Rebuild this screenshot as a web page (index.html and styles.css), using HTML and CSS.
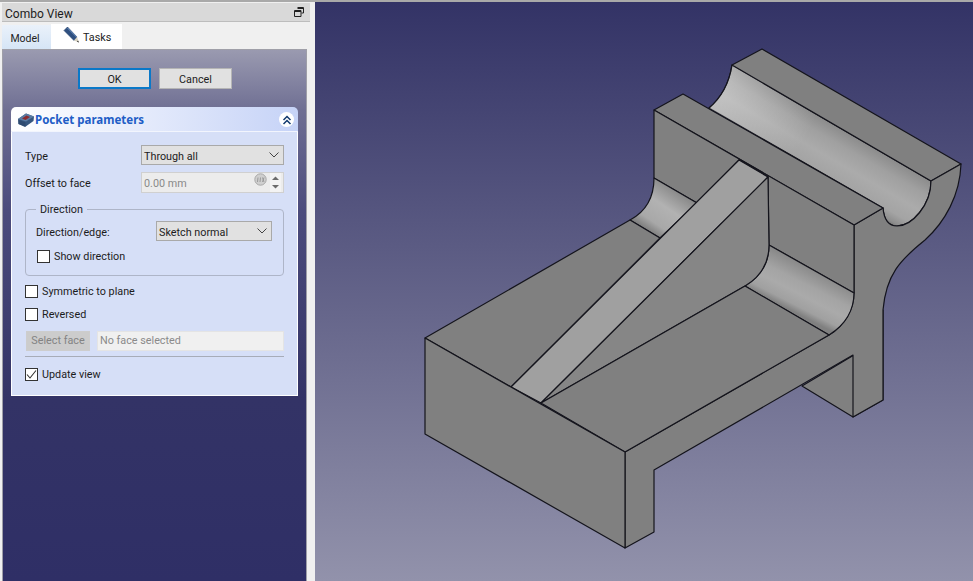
FILE: index.html
```html
<!DOCTYPE html>
<html lang="en">
<head>
<meta charset="utf-8">
<title>Combo View</title>
<link rel="stylesheet" href="styles.css">
</head>
<body>
<div class="app">
  <aside class="dock">
    <header class="dock-title">
      <span class="dock-name">Combo View</span>
      <svg class="float-icon" width="10" height="10" viewBox="0 0 10 10"><path d="M3.500 .5h6v5.500h-2M.5 3.500h6.500v6h-6.500zM.5 4.500h6.500M3.500 1.500h6" fill="none" stroke="#222"/></svg>
    </header>
    <nav class="tabs">
      <div class="tab tab-model">Model</div>
      <div class="tab tab-active">
        <svg class="pencil" width="17" height="18" viewBox="0 0 17 18">
          <path d="M1 4.500 4.500 1 14 11 11 14.500z" fill="#2f5080" stroke="#1f3a66" stroke-width=".6"/>
          <path d="M4.500 2 13.500 11" stroke="#6f93c4" stroke-width="1"/>
          <path d="M11 14.500 14 11 16 16.500z" fill="#d8d2c0"/>
          <path d="M15 14.500 16 16.500 14 15.800z" fill="#222"/>
        </svg>
        <span class="tab-text">Tasks</span>
      </div>
    </nav>
    <main class="panel">
      <div class="actions">
        <button class="btn btn-default">OK</button>
        <button class="btn">Cancel</button>
      </div>
      <section class="taskbox">
        <header class="taskbox-head">
          <svg class="pocket-icon" width="18" height="16" viewBox="0 0 18 16">
            <path d="M1 7 9 1.500 17 4.500 16.500 9 8 15 1.500 12z" fill="#36567e"/>
            <path d="M1 7 9 1.500 17 4.500 9 9.500z" fill="#5a7ba3"/>
            <path d="M5 6.500 9.500 3.500 13 5 8.500 8z" fill="#8c2b30"/>
            <path d="M1.500 8 8.500 10.500 8.500 14.500 1.500 12z" fill="#2e4a70"/>
          </svg>
          <span class="taskbox-title">Pocket parameters</span>
          <span class="collapse">
            <svg width="10" height="10" viewBox="0 0 10 10"><path d="M1.500 5 5 1.500 8.500 5M1.500 9 5 5.500 8.500 9" fill="none" stroke="#123a6e" stroke-width="1.500"/></svg>
          </span>
        </header>
        <div class="taskbox-body">
          <div class="row row-type">
            <label class="label">Type</label>
            <div class="combo combo-wide"><span class="value">Through all</span><svg width="10" height="6" viewBox="0 0 10 6"><path d="M.5 .5 5 5 9.500 .5" fill="none" stroke="#444"/></svg></div>
          </div>
          <div class="row row-offset">
            <label class="label">Offset to face</label>
            <div class="spin">
              <span class="value spin-value">0.00 mm</span>
              <svg class="fx" width="13" height="13" viewBox="0 0 13 13"><circle cx="6.500" cy="6.500" r="5.700" fill="#cfcfcf" stroke="#a8a8a8"/><path d="M4 4.500 3.500 9M6.500 4.500 6 9M8.500 4.500 10 9M10 4.500 8.500 9" stroke="#9a9a9a" fill="none"/></svg>
              <div class="spin-arrows">
                <svg width="7" height="4" viewBox="0 0 7 4"><path d="M0 4 3.500 .5 7 4z" fill="#6b6b6b"/></svg>
                <svg width="7" height="4" viewBox="0 0 7 4"><path d="M0 0 3.500 3.500 7 0z" fill="#6b6b6b"/></svg>
              </div>
            </div>
          </div>
          <fieldset class="group">
            <legend class="legend">Direction</legend>
            <div class="row row-dir">
              <label class="label">Direction/edge:</label>
              <div class="combo combo-dir"><span class="value">Sketch normal</span><svg width="10" height="6" viewBox="0 0 10 6"><path d="M.5 .5 5 5 9.500 .5" fill="none" stroke="#444"/></svg></div>
            </div>
            <div class="check check-dir"><span class="box"></span><span>Show direction</span></div>
          </fieldset>
          <div class="check check-sym"><span class="box"></span><span>Symmetric to plane</span></div>
          <div class="check check-rev"><span class="box"></span><span>Reversed</span></div>
          <div class="row row-face">
            <button class="btn-face">Select face</button>
            <div class="face-edit">No face selected</div>
          </div>
          <hr class="sep">
          <div class="check check-upd">
            <span class="box"><svg width="11" height="11" viewBox="0 0 11 11"><path d="M1 5.500 4 9 10 1.500" fill="none" stroke="#333" stroke-width="1.100"/></svg></span>
            <span>Update view</span>
          </div>
        </div>
      </section>
    </main>
  </aside>
  <section class="viewport">
    <svg class="model" width="658" height="579" viewBox="315 2 658 579">
      <defs>
        <linearGradient id="sky" x1="0" y1="0" x2="0" y2="1">
          <stop offset="0" stop-color="#333366"/>
          <stop offset="1" stop-color="#9292ab"/>
        </linearGradient>
        <linearGradient id="groove" gradientUnits="userSpaceOnUse" x1="765" y1="85" x2="733" y2="140">
          <stop offset="0" stop-color="#8c8c8c"/>
          <stop offset=".22" stop-color="#a0a0a0"/>
          <stop offset=".48" stop-color="#ababab"/>
          <stop offset=".72" stop-color="#a4a4a4"/>
          <stop offset=".85" stop-color="#8e8e8e"/>
          <stop offset="1" stop-color="#4e4e4e"/>
        </linearGradient>
        <linearGradient id="grooveEnd" gradientUnits="userSpaceOnUse" x1="715" y1="75" x2="810" y2="130">
          <stop offset="0" stop-color="#ffffff" stop-opacity=".32"/>
          <stop offset="1" stop-color="#ffffff" stop-opacity="0"/>
        </linearGradient>
        <linearGradient id="cylR" gradientUnits="userSpaceOnUse" x1="811" y1="269" x2="790" y2="310">
          <stop offset="0" stop-color="#8a8a8a"/>
          <stop offset=".35" stop-color="#a4a4a4"/>
          <stop offset=".6" stop-color="#aaaaaa"/>
          <stop offset=".85" stop-color="#a0a0a0"/>
          <stop offset="1" stop-color="#808080"/>
        </linearGradient>
        <linearGradient id="cylL" gradientUnits="userSpaceOnUse" x1="675" y1="190" x2="648" y2="230">
          <stop offset="0" stop-color="#8a8a8a"/>
          <stop offset=".4" stop-color="#b2b2b2"/>
          <stop offset=".8" stop-color="#a8a8a8"/>
          <stop offset="1" stop-color="#808080"/>
        </linearGradient>
      </defs>
      <rect x="315" y="2" width="658" height="579" fill="url(#sky)"/>
      <g stroke="#14141c" stroke-width="1.200" stroke-linejoin="round" fill="#808080">
        <path d="M854 355 802 386 853 417 883 400 883 310 854 300z"/>
        <path d="M732 65 C729 84 722 97 709 108 L883 208 C884 220 889 226 897 226 C912 226 931 205 931 181z" fill="url(#groove)"/>
        <path d="M732 65 C729 84 722 97 709 108 L800 160 L825 118z" fill="url(#grooveEnd)" stroke="none"/>
        <path d="M732 65 C729 84 722 97 709 108" fill="none"/>
        <path d="M762 49 732 65 931 181 961 164z"/>
        <path d="M931 181 961 164 C960 195 945 222 925 240 C900 260 886 275 883 310 L883 400 853 417 853 355 654 470 654 532 625 548 625 452 829 335 C845 325 854 310 854 293 L854 225 883 208 C884 220 889 226 897 226 C912 226 931 205 931 181z"/>
        <path d="M654 110 683 94 883 208 854 225z"/>
        <path d="M654 110 854 225 854 293 769 245 768 177 739 160 697 203 654 178z"/>
        <path d="M654 178 697 203 660 238 630 220 C645 212 654 198 654 178z" fill="url(#cylL)"/>
        <path d="M769 245 854 293 C854 310 845 325 829 335 L745 286 C760 277 769 263 769 245z" fill="url(#cylR)"/>
        <path d="M630 220 425 338 511 387 660 238z"/>
        <path d="M739 160 768 177 541 403 511 387z" fill="#a0a0a0"/>
        <path d="M768 177 769 245 C769 263 760 277 745 286 L541 403z" fill="#868686"/>
        <path d="M745 286 829 335 625 452 541 403z"/>
        <path d="M425 338 625 452 625 548 425 434z"/>
      </g>
    </svg>
  </section>
</div>
</body>
</html>
```
FILE: styles.css
```css
* { box-sizing: border-box; }
html, body { margin: 0; padding: 0; height: 100%; overflow: hidden; }
body { font-family: Roboto, "Open Sans", sans-serif; font-size: 10.8px; color: #1c1c1c; background: #f0f0f0; }
.app { display: flex; width: 973px; height: 581px; border-top: 2px solid #a9a9a9; background: #f0f0f0; }
.dock { width: 315px; flex: none; display: flex; flex-direction: column; padding: 1px 5px 0 2px; position: relative; }
.dock-title { height: 19px; width: 308px; background: #d9d9d9; border-bottom: 1px solid #bdbdbd; display: flex; align-items: center; justify-content: space-between; padding: 0 6px 0 3px; font-size: 12px; flex: none; }
.dock-name { padding-top: 4px; }
.float-icon { display: block; }
.tabs { display: flex; height: 27px; padding: 2px 0 0 0; flex: none; margin-top: 0; align-items: flex-end; }
.tab { height: 24px; width: 49px; background: linear-gradient(#eaf1fa, #d6e5f6); display: flex; align-items: center; justify-content: center; padding-top: 3px; color: #222; }
.tab-model { padding-right: 3px; font-size: 10.5px; }
.tab-active { width: 71px; height: 25px; background: #ffffff; gap: 3px; padding: 0 0 0 12px; justify-content: flex-start; margin-left: 0; }
.tab-text { padding-top: 2px; }
.pencil { display: block; margin-top: -3px; }
.panel { width: 305px; flex: 1; border: 1px solid #9f9fa8; border-bottom: 0; background: linear-gradient(#9a9ab0 0, #6f6f93 60px, #4c4c7d 160px, #333366 350px, #2f2f66 100%); padding: 18px 8px 0 8px; display: flex; flex-direction: column; }
.actions { display: flex; justify-content: center; gap: 8px; height: 21px; margin-left: 1px; flex: none; }
.btn { width: 73px; height: 21px; border: 1px solid #b5b5b5; background: #e1e1e1; font: inherit; color: #1c1c1c; padding: 2px 0 0 0; }
.btn-default { border: 2px solid #0a78c8; }
.taskbox { margin-top: 18px; width: 287px; height: 289px; display: flex; flex-direction: column; }
.taskbox-head { height: 25px; flex: none; border-radius: 5px 5px 0 0; background: linear-gradient(90deg, #ffffff, #c6d3f7); display: flex; align-items: center; padding: 1px 4px 0 6px; gap: 0; border-bottom: 1px solid #f2f5fd; }
.pocket-icon { display: block; }
.taskbox-title { font-family: "Noto Sans", sans-serif; font-weight: 700; color: #215dc6; font-size: 11.5px; flex: 1; }
.collapse { width: 15px; height: 15px; border-radius: 50%; background: #fff; display: flex; align-items: center; justify-content: center; }
.taskbox-body { flex: 1; background: #d6dff7; border: 1px solid #fff; border-top: 0; padding: 13px 13px 0 13px; display: flex; flex-direction: column; position: relative; }
.row { display: flex; align-items: center; }
.label { flex: none; padding-top: 2px; }
.value { padding-top: 2px; }
.row-type { height: 20px; justify-content: space-between; }
.row-offset { height: 21px; margin-top: 7px; justify-content: space-between; }
.combo { height: 20px; border: 1px solid #a9a9a9; background: #e1e1e1; display: flex; align-items: center; justify-content: space-between; padding: 0 4px 0 2px; }
.combo-wide { width: 143px; }
.combo-dir { width: 116px; }
.spin { width: 143px; height: 21px; border: 1px solid #d0d0d0; background: #ececec; color: #8a8a8a; display: flex; align-items: center; padding: 0 2px; position: relative; }
.spin-value { flex: 1; }
.fx { margin: -6px 3px 0 0; }
.spin-arrows { width: 11px; height: 19px; display: flex; flex-direction: column; align-items: center; justify-content: space-around; background: #f3f3f3; }
.group { margin: 9px 0 0 0; width: 259px; height: 74px; padding: 0 11px 0 10px; border: 1px solid #aeb5c8; border-radius: 4px; min-width: 0; position: relative; }
.legend { padding: 2px 4px 0 4px; margin-left: 0; line-height: 12px; height: 14px; }
.row-dir { justify-content: space-between; height: 20px; margin-top: 5px; }
.check { display: flex; align-items: center; gap: 4px; height: 14px; }
.box { width: 13px; height: 13px; border: 1px solid #333; background: #fff; display: flex; align-items: center; justify-content: center; flex: none; }
.check-dir { margin: 8px 0 0 1px; }
.check-sym { margin-top: 8px; }
.check-rev { margin-top: 9px; }
.row-face { margin-top: 9px; height: 21px; gap: 7px; }
.btn-face { width: 64px; height: 20px; margin-left: 1px; border: 1px solid #cdcdcd; background: #cccccc; color: #838383; font: inherit; padding: 0; }
.face-edit { width: 187px; height: 20px; background: #f0f0f0; border: 1px solid #e4e4e4; color: #8a8a8a; padding: 0 2px; line-height: 18px; }
.sep { width: 259px; height: 1px; border: 0; background: #a7acb8; margin: 5px 0 0 0; }
.check-upd { margin-top: 10px; }
.viewport { flex: 1; min-width: 0; }
.model { display: block; }
```
